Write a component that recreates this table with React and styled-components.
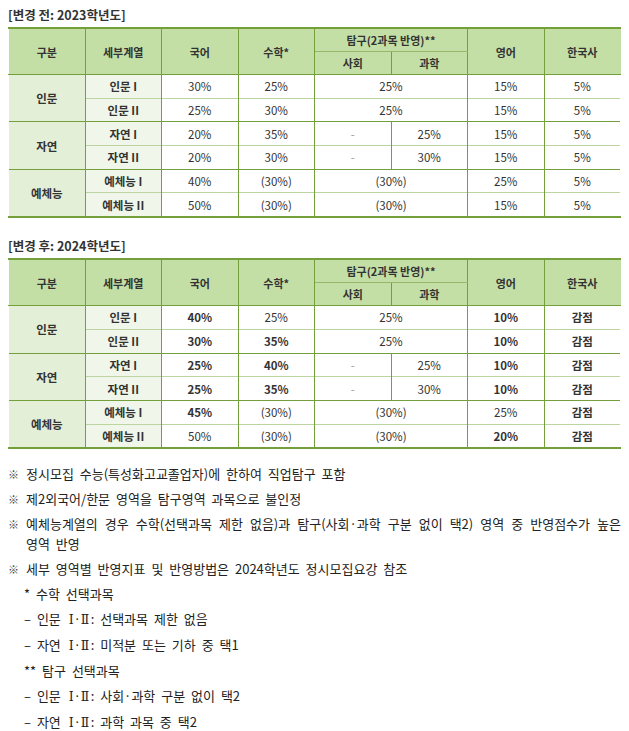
import styled, { createGlobalStyle } from "styled-components";

// 전체 글꼴, 여백
const GlobalStyle = createGlobalStyle`
  body {
    margin: 0;
    background: #ffffff;
    font-family: "Noto Sans CJK KR", "Noto Sans", sans-serif;
    color: #333333;
  }
`;

const DARK = "#74a03c";
const LIGHT = "#bcd5a0";

const Page = styled.div`
  padding: 6px 8px 10px;
`;

const Caption = styled.div`
  font-size: 12.5px;
  font-weight: 700;
  line-height: 17px;
  color: #333;
  margin-top: ${(p) => (p.$gap ? "19px" : "0")};
  margin-bottom: 4px;
`;

const Table = styled.table`
  width: 100%;
  table-layout: fixed;
  border-collapse: collapse;
  border-top: 2px solid ${DARK};
  border-bottom: 2px solid ${DARK};
`;

const Th = styled.th`
  background: #c4dfa6;
  font-size: 11px;
  font-weight: 700;
  color: #333;
  height: 22px;
  padding: 0;
  text-align: center;
  border: 1px solid ${DARK};
  border-left-color: ${(p) => (p.$first ? "transparent" : DARK)};
  border-right-color: ${(p) => (p.$last ? "transparent" : DARK)};
  border-bottom-color: ${(p) => (p.$soft ? "#93b868" : DARK)};
`;

const Td = styled.td`
  height: 22.7px;
  padding: 0;
  text-align: center;
  font-size: 11.5px;
  font-weight: ${(p) => (p.$bold ? 700 : 400)};
  color: ${(p) => (p.$dim ? "#999" : "#333")};
  background: ${(p) => p.$bg || "#ffffff"};
  border-left: 1px solid ${(p) => (p.$first ? "transparent" : p.$softLeft ? LIGHT : DARK)};
  border-right: 1px solid ${(p) => (p.$last ? "transparent" : DARK)};
  border-top: 1px solid ${(p) => (p.$groupTop ? DARK : LIGHT)};
`;

const Notes = styled.div`
  margin-top: 15px;
  font-size: 13px;
  line-height: 20px;
  color: #222;
`;

const Note = styled.div`
  display: flex;
  margin-bottom: 5px;
  padding-left: ${(p) => (p.$sub ? "16px" : "0")};
`;

const Mark = styled.span`
  flex: 0 0 18px;
  font-size: 11px;
  color: #444;
`;

const NoteText = styled.span`
  flex: 1;
  text-align: justify;
  word-break: keep-all;
  word-spacing: 3px;
`;

// 로마숫자 Ⅰ·Ⅱ
const Numeral = styled.span`
  font-family: "DejaVu Serif", "Liberation Serif", serif;
  font-size: 12.5px;
  letter-spacing: 1.5px;
  word-spacing: 0;
  margin-left: 2px;
`;

const before = [
  ["인문", "인문 I", ["30%", "25%", ["25%", 2], "15%", "5%"]],
  ["", "인문 II", ["25%", "30%", ["25%", 2], "15%", "5%"]],
  ["자연", "자연 I", ["20%", "35%", "-", "25%", "15%", "5%"]],
  ["", "자연 II", ["20%", "30%", "-", "30%", "15%", "5%"]],
  ["예체능", "예체능 I", ["40%", "(30%)", ["(30%)", 2], "25%", "5%"]],
  ["", "예체능 II", ["50%", "(30%)", ["(30%)", 2], "15%", "5%"]],
];

// * 로 시작하면 굵게
const after = [
  ["인문", "인문 I", ["*40%", "25%", ["25%", 2], "*10%", "*감점"]],
  ["", "인문 II", ["*30%", "*35%", ["25%", 2], "*10%", "*감점"]],
  ["자연", "자연 I", ["*25%", "*40%", "-", "25%", "*10%", "*감점"]],
  ["", "자연 II", ["*25%", "*35%", "-", "30%", "*10%", "*감점"]],
  ["예체능", "예체능 I", ["*45%", "(30%)", ["(30%)", 2], "25%", "*감점"]],
  ["", "예체능 II", ["50%", "(30%)", ["(30%)", 2], "*20%", "*감점"]],
];

function ScoreTable({ rows }) {
  return (
    <Table>
      <colgroup>
        {Array.from({ length: 8 }).map((_, i) => (
          <col key={i} style={{ width: "12.5%" }} />
        ))}
      </colgroup>
      <thead>
        <tr>
          <Th rowSpan={2} $first>구분</Th>
          <Th rowSpan={2}>세부계열</Th>
          <Th rowSpan={2}>국어</Th>
          <Th rowSpan={2}>수학*</Th>
          <Th colSpan={2} $soft>탐구(2과목 반영)**</Th>
          <Th rowSpan={2}>영어</Th>
          <Th rowSpan={2} $last>한국사</Th>
        </tr>
        <tr>
          <Th>사회</Th>
          <Th>과학</Th>
        </tr>
      </thead>
      <tbody>
        {rows.map(([group, sub, cells], i) => {
          const top = i % 2 === 0;
          let prevDash = false;
          return (
            <tr key={sub}>
              {group && (
                <Td rowSpan={2} $first $bold $groupTop $bg="#e3efd6">
                  {group}
                </Td>
              )}
              <Td $bold $groupTop={top} $bg="#f0f6e9">
                {sub}
              </Td>
              {cells.map((c, j) => {
                const [raw, span] = Array.isArray(c) ? c : [c, 1];
                const bold = raw.startsWith("*");
                const text = bold ? raw.slice(1) : raw;
                const softLeft = prevDash;
                prevDash = text === "-";
                return (
                  <Td
                    key={j}
                    colSpan={span}
                    $bold={bold}
                    $dim={text === "-"}
                    $groupTop={top}
                    $softLeft={softLeft}
                    $last={j === cells.length - 1}
                  >
                    {text}
                  </Td>
                );
              })}
            </tr>
          );
        })}
      </tbody>
    </Table>
  );
}

const Sub = ({ lead, rest }) => (
  <>
    – {lead} <Numeral>Ⅰ·Ⅱ</Numeral>: {rest}
  </>
);

const notes = [
  { mark: "※", text: "정시모집 수능(특성화고교졸업자)에 한하여 직업탐구 포함" },
  { mark: "※", text: "제2외국어/한문 영역을 탐구영역 과목으로 불인정" },
  {
    mark: "※",
    text: "예체능계열의 경우 수학(선택과목 제한 없음)과 탐구(사회·과학 구분 없이 택2) 영역 중 반영점수가 높은 영역 반영",
  },
  { mark: "※", text: "세부 영역별 반영지표 및 반영방법은 2024학년도 정시모집요강 참조" },
  { sub: true, text: "* 수학 선택과목" },
  { sub: true, text: <Sub lead="인문" rest="선택과목 제한 없음" /> },
  { sub: true, text: <Sub lead="자연" rest="미적분 또는 기하 중 택1" /> },
  { sub: true, text: "** 탐구 선택과목" },
  { sub: true, text: <Sub lead="인문" rest="사회·과학 구분 없이 택2" /> },
  { sub: true, text: <Sub lead="자연" rest="과학 과목 중 택2" /> },
];

export default function App() {
  return (
    <Page>
      <GlobalStyle />
      <Caption>[변경 전: 2023학년도]</Caption>
      <ScoreTable rows={before} />
      <Caption $gap>[변경 후: 2024학년도]</Caption>
      <ScoreTable rows={after} />
      <Notes>
        {notes.map((n, i) => (
          <Note key={i} $sub={n.sub}>
            {n.mark ? <Mark>{n.mark}</Mark> : null}
            <NoteText>{n.text}</NoteText>
          </Note>
        ))}
      </Notes>
    </Page>
  );
}
